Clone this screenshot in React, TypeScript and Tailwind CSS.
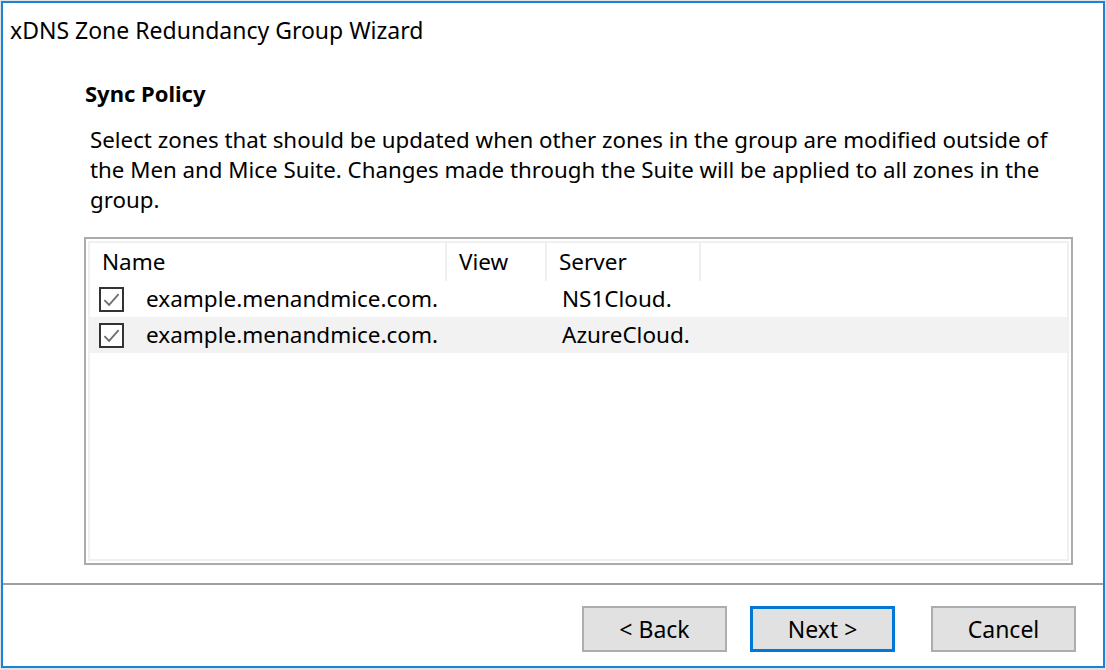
import { useState } from 'react'

const FONT = "font-['Noto_Sans','Open_Sans',sans-serif]"

type Zone = {
  name: string
  view: string
  server: string
  checked: boolean
}

const ZONES: Zone[] = [
  { name: 'example.menandmice.com.', view: '', server: 'NS1Cloud.', checked: true },
  { name: 'example.menandmice.com.', view: '', server: 'AzureCloud.', checked: true },
]

function CheckBox({ checked, onToggle }: { checked: boolean; onToggle: () => void }) {
  return (
    <button
      onClick={onToggle}
      className="flex h-[25px] w-[25px] shrink-0 items-center justify-center border-2 border-[#333333] bg-white"
    >
      {checked && (
        <svg width="19" height="19" viewBox="0 0 16 16">
          <path d="M2 8.5 L6 12.5 L14 3.5" fill="none" stroke="#6e6e6e" strokeWidth="1.5" />
        </svg>
      )}
    </button>
  )
}

export default function App() {
  const [zones, setZones] = useState(ZONES)

  const toggle = (i: number) =>
    setZones((prev) => prev.map((z, j) => (j === i ? { ...z, checked: !z.checked } : z)))

  return (
    <div className={`h-[670px] w-[1106px] bg-[#e3e3e3] pl-[1px] pt-[1px] text-black ${FONT}`}>
      <div className="flex h-[667px] w-[1104px] flex-col border-2 border-[#1883d7] bg-white">
        {/* Title */}
        <div className="h-[60px] pl-[7px] pt-[12px] text-[23px] leading-[30px]">
          xDNS Zone Redundancy Group Wizard
        </div>

        {/* Page header */}
        <div className="pl-[82px] pt-[15px] text-[22px] font-bold leading-[30px]">Sync Policy</div>

        {/* Description */}
        <p className="mt-[17px] pl-[87px] text-[22.3px] leading-[30px]">
          Select zones that should be updated when other zones in the group are modified outside of
          <br />
          the Men and Mice Suite. Changes made through the Suite will be applied to all zones in the
          <br />
          group.
        </p>

        {/* Zone list */}
        <div className="ml-[81px] mt-[22px] h-[328px] w-[989px] border-2 border-[#ababab] p-[2px]">
          <div className="h-full w-full border-2 border-[#f0f0f0] bg-white text-[22.5px]">
            <div className="flex h-[38px] items-center">
              <div className="flex h-full w-[357px] items-center border-r-2 border-[#efefef] pl-[12px]">Name</div>
              <div className="flex h-full w-[100px] items-center border-r-2 border-[#efefef] pl-[12px]">View</div>
              <div className="flex h-full w-[154px] items-center border-r-2 border-[#efefef] pl-[12px]">Server</div>
            </div>
            {zones.map((z, i) => (
              <div
                key={i}
                className={`flex h-[36px] items-center ${i === 1 ? 'bg-[#f2f2f2]' : ''}`}
              >
                <div className="flex w-[357px] items-center gap-[22px] pl-[9px]">
                  <CheckBox checked={z.checked} onToggle={() => toggle(i)} />
                  <span>{z.name}</span>
                </div>
                <div className="w-[100px]">{z.view}</div>
                <div className="pl-[15px]">{z.server}</div>
              </div>
            ))}
          </div>
        </div>

        <div className="flex-1" />

        {/* Footer */}
        <div className="h-[2px] bg-[#a0a0a0]" />
        <div className="flex h-[81px] items-start justify-end gap-[23px] pr-[27px] pt-[21px] text-[23px]">
          <button className="h-[46px] w-[145px] border-2 border-[#adadad] bg-[#e1e1e1]">&lt; Back</button>
          <button className="mr-[13px] h-[46px] w-[145px] border-[3px] border-[#0078d7] bg-[#e1e1e1]">Next &gt;</button>
          <button className="h-[46px] w-[145px] border-2 border-[#adadad] bg-[#e1e1e1]">Cancel</button>
        </div>
      </div>
    </div>
  )
}
